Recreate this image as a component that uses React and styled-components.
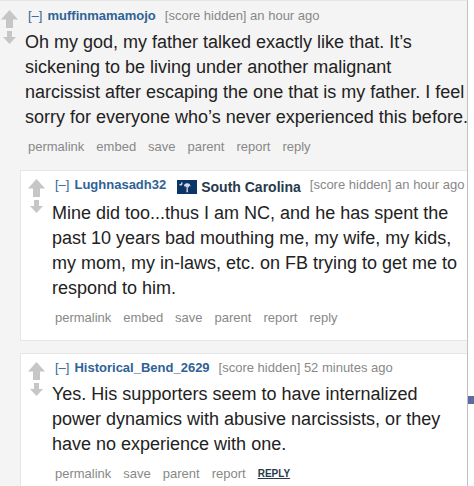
import React from 'react';
import styled, {createGlobalStyle} from "styled-components";

const comments = {
    author: "muffinmamamojo",
    time: "an hour ago",
    text: "Oh my god, my father talked exactly like that. It’s sickening to be living under another malignant narcissist after escaping the one that is my father. I feel sorry for everyone who’s never experienced this before.",
    actions: ["permalink", "embed", "save", "parent", "report", "reply"],
    replies: [
        {
            author: "Lughnasadh32",
            flair: "South Carolina",
            time: "an hour ago",
            text: "Mine did too...thus I am NC, and he has spent the past 10 years bad mouthing me, my wife, my kids, my mom, my in-laws, etc. on FB trying to get me to respond to him.",
            actions: ["permalink", "embed", "save", "parent", "report", "reply"]
        },
        {
            author: "Historical_Bend_2629",
            time: "52 minutes ago",
            text: "Yes. His supporters seem to have internalized power dynamics with abusive narcissists, or they have no experience with one.",
            actions: ["permalink", "save", "parent", "report"],
            canReply: true
        }
    ]
};

const Arrow = ({down}) => <VoteButton type="button" aria-label={down ? "downvote" : "upvote"}>
    {down
        ? <svg width="13" height="13" viewBox="0 0 13 13"><path d="M4 0h5v6h4l-6.500 7L0 6h4z" fill="#c6c6c6"/></svg>
        : <svg width="17" height="18" viewBox="0 0 17 18"><path d="M8.500 0L17 9.500h-5V18H5V9.500H0z" fill="#c6c6c6"/></svg>}
</VoteButton>;

const Flag = () => <svg width="20" height="14" viewBox="0 0 20 14" aria-hidden="true">
    <path d="M0 0h20v14H0z" fill="#0a3566"/>
    <path d="M4.500 1.800a2 2 0 1 1-2.700 2.700 2.300 2.300 0 0 0 2.700-2.700z" fill="#d5dee8"/>
    <path d="M9.700 6h1.100l.3 6.200H9.300z" fill="#b9c7d6"/>
    <path d="M7 6.800c-.2-2 .8-3.500 3.200-3.600 2.400.1 3.400 1.600 3.200 3.600l-1.300-1-.6 2-1.300-1.500-1.300 1.500-.6-2z" fill="#d5dee8"/>
</svg>;

const Comment = ({comment}) => <>
    <Votes>
        <Arrow/>
        <Arrow down/>
    </Votes>
    <Entry>
        <Tagline>
            <Collapse type="button">[–]</Collapse>
            <Author href="#">{comment.author}</Author>
            {comment.flair && <Flair><Flag/>{comment.flair}</Flair>}
            <Score>[score hidden] {comment.time}</Score>
        </Tagline>
        <Body>{comment.text}</Body>
        <Actions>
            {comment.actions.map(action => <Action key={action} href="#">{action}</Action>)}
            {comment.canReply && <ReplyAction href="#">REPLY</ReplyAction>}
        </Actions>
    </Entry>
</>;

export default function App() {
    return <Page>
        <GlobalStyle/>
        <Thread>
            <Parent><Comment comment={comments}/></Parent>
            <Replies>
                {comments.replies.map(reply => <Reply key={reply.author}>
                    <Comment comment={reply}/>
                </Reply>)}
            </Replies>
        </Thread>
        <Side><SideMark/></Side>
    </Page>
}

const GlobalStyle = createGlobalStyle`
    *{
        box-sizing: border-box;
    }
    body{
        margin: 0;
        background: #fff;
        font-family: "Liberation Sans", Arial, sans-serif;
        font-size: 13px;
        line-height: 16px;
    }
    a{
        text-decoration: none;
    }
    button{
        padding: 0;
        border: 0;
        background: none;
        font: inherit;
        cursor: pointer;
    }
`;

const Page = styled.div`
    display: flex;
    min-height: 100vh;
`;

const Thread = styled.main`
    display: flex;
    flex: 1;
    flex-direction: column;
    min-width: 0;
    border-top: 1px solid #e6e6e6;
    border-right: 1px solid #c0c0c0;
    background: #f4f4f4;
`;

const Parent = styled.article`
    display: flex;
    padding: 7px 0 15px;
`;

const Replies = styled.div`
    display: flex;
    flex: 1;
    flex-direction: column;
    gap: 12px;
    padding-left: 20px;
`;

const Reply = styled.article`
    display: flex;
    padding: 6px 0 14px 6px;
    border: 1px solid #e6e6e6;
    border-right: 0;
    background: #fff;
    &:last-child{
        flex: 1;
        padding-bottom: 0;
        border-bottom: 0;
    }
`;

const Votes = styled.div`
    display: flex;
    flex-direction: column;
    align-items: center;
    gap: 3px;
    width: 19px;
    margin-right: 6px;
    padding-top: 2px;
`;

const VoteButton = styled.button`
    display: flex;
`;

const Entry = styled.div`
    flex: 1;
    min-width: 0;
`;

const Tagline = styled.header`
    display: flex;
    align-items: flex-start;
    padding-left: 3px;
    white-space: nowrap;
`;

const Collapse = styled.button`
    margin-right: 5px;
    color: #336699;
`;

const Author = styled.a`
    color: #2f6296;
    font-weight: bold;
`;

const Flair = styled.span`
    display: flex;
    align-items: center;
    gap: 4px;
    margin-left: 11px;
    padding-top: 2px;
    color: #263a4c;
    font-size: 14px;
    font-weight: bold;
`;

const Score = styled.span`
    margin-left: 9px;
    color: #888;
`;

//long lines may run into the gutter beside the thread
const Body = styled.p`
    margin: 6px -4px 9px 0;
    color: #222;
    font-size: 18px;
    line-height: 25px;
`;

const Actions = styled.nav`
    display: flex;
    align-items: center;
    gap: 12px;
    padding-left: 3px;
`;

const Action = styled.a`
    color: #888;
`;

const ReplyAction = styled.a`
    color: #263a4c;
    font-size: 10px;
    font-weight: bold;
    text-decoration: underline;
`;

const Side = styled.aside`
    width: 6px;
    padding-top: 396px;
`;

const SideMark = styled.div`
    height: 8px;
    background: #5b6ba5;
`;
